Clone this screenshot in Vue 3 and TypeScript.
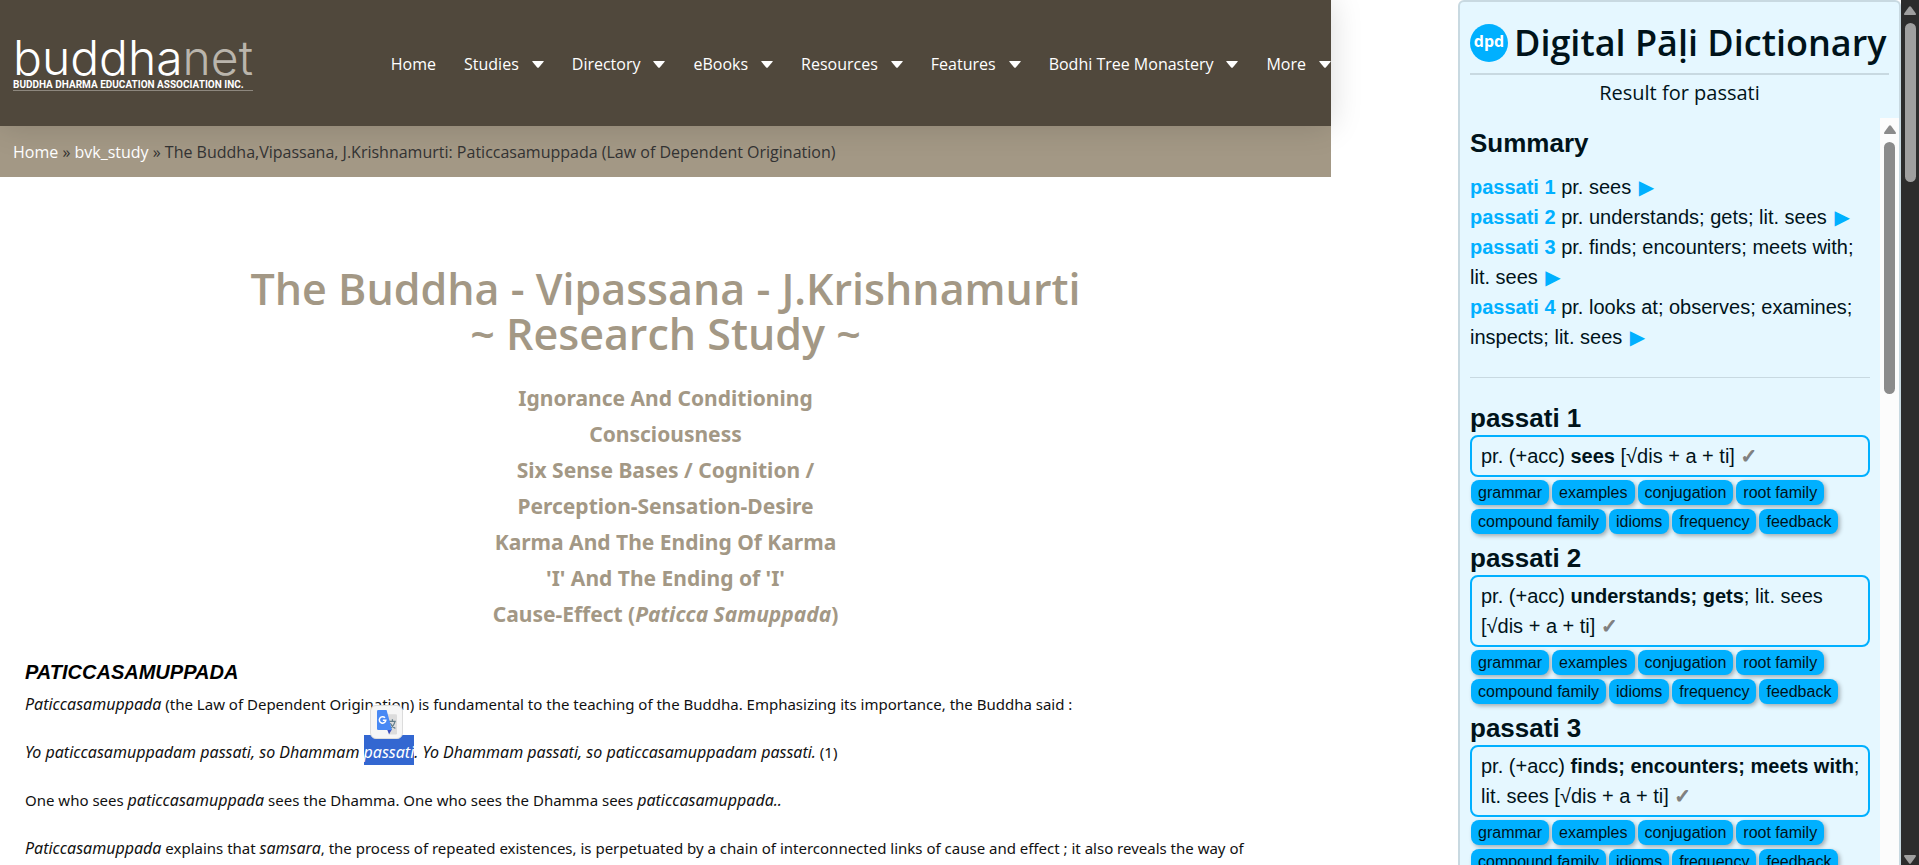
<script setup lang="ts">
interface NavItem { label: string; menu: boolean }
interface Summary { word: string; text: string }
interface Entry { word: string; meaning: string; literal: string }

const nav: NavItem[] = [
  { label: 'Home', menu: false },
  { label: 'Studies', menu: true },
  { label: 'Directory', menu: true },
  { label: 'eBooks', menu: true },
  { label: 'Resources', menu: true },
  { label: 'Features', menu: true },
  { label: 'Bodhi Tree Monastery', menu: true },
  { label: 'More', menu: true },
]

const summary: Summary[] = [
  { word: 'passati 1', text: 'pr. sees' },
  { word: 'passati 2', text: 'pr. understands; gets; lit. sees' },
  { word: 'passati 3', text: 'pr. finds; encounters; meets with; lit. sees' },
  { word: 'passati 4', text: 'pr. looks at; observes; examines; inspects; lit. sees' },
]

const entries: Entry[] = [
  { word: 'passati 1', meaning: 'sees', literal: '' },
  { word: 'passati 2', meaning: 'understands; gets', literal: '; lit. sees' },
  { word: 'passati 3', meaning: 'finds; encounters; meets with', literal: '; lit. sees' },
]

const sections: string[] = [
  'grammar', 'examples', 'conjugation', 'root family',
  'compound family', 'idioms', 'frequency', 'feedback',
]
</script>

<template>
  <div class="page">
    <div class="site">
      <header class="site-header">
        <a class="brand" href="#">
          <span class="brand-name">buddha<span class="brand-net">net</span></span>
          <span class="brand-tag">BUDDHA DHARMA EDUCATION ASSOCIATION INC.</span>
        </a>
        <nav class="nav" aria-label="Main">
          <a v-for="item in nav" :key="item.label" class="nav-link" href="#">
            {{ item.label }}
            <svg v-if="item.menu" class="caret" viewBox="0 0 12 7" aria-hidden="true"><path d="M0.8 0h10.4q1 0 .4.8L6.8 6.4q-.8.8-1.6 0L.4.8Q-.2 0 .8 0z" /></svg>
          </a>
        </nav>
      </header>
      <div class="crumbs">
        <a href="#">Home</a> » <a href="#">bvk_study</a> » The Buddha,Vipassana, J.Krishnamurti: Paticcasamuppada (Law of Dependent Origination)
      </div>
      <main class="article">
        <h1>The Buddha - Vipassana - J.Krishnamurti<br>~ Research Study ~</h1>
        <h2>
          Ignorance And Conditioning<br>
          Consciousness<br>
          Six Sense Bases / Cognition /<br>
          Perception-Sensation-Desire<br>
          Karma And The Ending Of Karma<br>
          'I' And The Ending of 'I'<br>
          Cause-Effect (<em>Paticca Samuppada</em>)
        </h2>
        <h3>PATICCASAMUPPADA</h3>
        <p><em>Paticcasamuppada</em> (the Law of Dependent Origination) is fundamental to the teaching of the Buddha. Emphasizing its importance, the Buddha said :</p>
        <p>
          <em>Yo paticcasamuppadam passati, so Dhammam <span class="selected">passati<button class="translate" type="button" aria-label="Translate selection"><svg viewBox="0 0 24 30" aria-hidden="true">
            <path d="M9 5h13.500q1.500 0 1.500 1.500V28q0 1.500-1.500 1.500H14z" fill="#dcdcdc" />
            <path d="M13.500 13.500h9M18.500 11v2.500M21.500 14q-1.500 6-6.500 8.500M16 16q2 4.500 6 6" fill="none" stroke="#607d8b" stroke-width="1.500" />
            <path d="M12 23h6l-3.500 6z" fill="#3a4fc0" />
            <path d="M1.500 0h10L18 24H1.500Q0 24 0 22.500v-21Q0 0 1.500 0z" fill="#4889f4" />
            <path d="M9.600 9.300A3.900 3.900 0 1 0 10.600 12.300H7" fill="none" stroke="#fff" stroke-width="1.800" />
          </svg></button></span>. Yo Dhammam passati, so paticcasamuppadam passati.</em> (1)
        </p>
        <p>One who sees <em>paticcasamuppada</em> sees the Dhamma. One who sees the Dhamma sees <em>paticcasamuppada..</em></p>
        <p><em>Paticcasamuppada</em> explains that <em>samsara</em>, the process of repeated existences, is perpetuated by a chain of interconnected links of cause and effect ; it also reveals the way of</p>
      </main>
    </div>

    <aside class="panel">
      <header class="panel-header">
        <div class="panel-title">
          <svg class="dpd" viewBox="0 0 38 38" role="img" aria-label="dpd">
            <circle cx="19" cy="19" r="19" fill="#00b0ff" />
            <text x="19" y="23" text-anchor="middle" class="dpd-text">dpd</text>
          </svg>
          <span>Digital Pāḷi Dictionary</span>
        </div>
        <div class="panel-result">Result for passati</div>
      </header>
      <div class="panel-body">
        <div class="results">
          <h4>Summary</h4>
          <ul class="summary">
            <li v-for="s in summary" :key="s.word">
              <b>{{ s.word }}</b> {{ s.text }} <a href="#" :aria-label="'Go to ' + s.word">▶</a>
            </li>
          </ul>
          <hr>
          <section v-for="e in entries" :key="e.word" class="entry">
            <h4>{{ e.word }}</h4>
            <div class="meaning">pr. (+acc) <b>{{ e.meaning }}</b>{{ e.literal }} [√dis + a + ti] <span class="tick">✓</span></div>
            <div class="buttons">
              <button v-for="s in sections" :key="s" type="button">{{ s }}</button>
            </div>
          </section>
        </div>
        <div class="track track-light" aria-hidden="true">
          <svg class="arrow" viewBox="0 0 12 9"><path d="M5 .8q1-1.200 2 0l4.700 6.400q.8 1.800-.9 1.800H1.200q-1.700 0-.9-1.800z" /></svg>
          <div class="thumb"></div>
        </div>
      </div>
    </aside>

    <div class="track track-dark" aria-hidden="true">
      <svg class="arrow" viewBox="0 0 12 9"><path d="M5 .8q1-1.200 2 0l4.700 6.400q.8 1.800-.9 1.800H1.200q-1.700 0-.9-1.800z" /></svg>
      <div class="thumb"></div>
      <svg class="arrow arrow-down" viewBox="0 0 12 9"><path d="M5 8.200q1 1.200 2 0l4.700-6.400Q12.500 0 10.800 0H1.200Q-.5 0 .3 1.800z" /></svg>
    </div>
  </div>
</template>

<style>
body {
  background: #fff;
  overflow: hidden;
}
</style>

<style scoped>
* {
  box-sizing: border-box;
}
.page {
  display: flex;
  height: 100vh;
  overflow: hidden;
  font-family: "Open Sans", "Noto Sans", sans-serif;
  font-size: 15px;
  color: #111;
}
.site {
  flex: 1;
  min-width: 0;
  margin-right: 127px;
}
.site-header {
  position: relative;
  display: flex;
  align-items: center;
  justify-content: space-between;
  height: 126px;
  padding-left: 13px;
  background: #50483c;
  box-shadow: 0 0 30px rgba(0, 0, 0, 0.15);
}
.brand {
  display: flex;
  flex-direction: column;
  color: #fff;
  text-decoration: none;
  white-space: nowrap;
}
.brand-name {
  font: 300 48px/44px Inter, "Liberation Sans", sans-serif;
}
.brand-net {
  color: #bab5ac;
}
.brand-tag {
  border-bottom: 1px solid #8d877e;
  font: bold 10px/10px Roboto, "Liberation Sans", sans-serif;
}
.nav {
  display: flex;
  gap: 28px;
  padding-top: 2px;
}
.nav-link {
  display: flex;
  align-items: center;
  gap: 13px;
  color: #fff;
  font-size: 16px;
  line-height: 24px;
  text-decoration: none;
  white-space: nowrap;
}
.caret {
  width: 12px;
  height: 7px;
  fill: #fff;
}
.crumbs {
  padding: 14px 13px 12px;
  background: #a39885;
  color: #333;
  font-size: 16px;
  line-height: 25px;
  white-space: nowrap;
}
.crumbs a {
  color: #fff;
  text-decoration: none;
}
.article {
  padding: 89px 25px 0;
}
h1, h2, h3, h4, p, ul {
  margin: 0;
}
h1, h2 {
  color: #a39885;
  text-align: center;
}
h1 {
  font-size: 43px;
  font-weight: 600;
  line-height: 45px;
}
h2 {
  margin-top: 24px;
  font-family: "Noto Sans", sans-serif;
  font-size: 21px;
  font-weight: 700;
  line-height: 36px;
}
h3 {
  margin: 25px 0 5px;
  color: #000;
  font: italic bold 20px/30px "Liberation Sans", sans-serif;
}
p {
  margin-bottom: 24px;
  font-family: "Noto Sans", sans-serif;
  line-height: 24px;
  white-space: nowrap;
}
p em {
  font-size: 16px;
  line-height: 20px;
}
.selected {
  position: relative;
  padding: 6px 0 2px;
  background: #3367d1;
  color: #fff;
}
.translate {
  position: absolute;
  top: -30px;
  left: 6px;
  width: 33px;
  height: 34px;
  padding: 4px;
  border: 1px solid #dcdcdc;
  border-radius: 6px;
  background: #f6f6f6;
}
.translate svg {
  display: block;
  width: 24px;
  height: 25px;
}
.panel {
  display: flex;
  flex-direction: column;
  width: 443px;
  border: 2px solid #c8d9e1;
  border-bottom: 0;
  border-radius: 6px 6px 0 0;
  background: #e5f7ff;
  color: #00131a;
}
.panel-header {
  padding: 10px 10px 0;
}
.panel-title {
  display: flex;
  align-items: center;
  gap: 6px;
  height: 63px;
  border-bottom: 2px solid #c8d9e1;
  font-size: 36px;
  font-weight: 600;
  line-height: 48px;
  white-space: nowrap;
}
.dpd {
  flex: none;
  width: 38px;
  height: 38px;
}
.dpd-text {
  fill: #fff;
  font: 700 16px "Open Sans", sans-serif;
}
.panel-result {
  height: 43px;
  font-size: 20px;
  line-height: 35px;
  text-align: center;
}
.panel-body {
  display: flex;
  flex: 1;
  min-height: 0;
}
.results {
  flex: 1;
  overflow: hidden;
  padding: 10px 10px 0;
  font: 20px/30px "Liberation Sans", Arial, sans-serif;
}
h4 {
  font-size: 26px;
  line-height: 30px;
}
.summary {
  margin-top: 14px;
  padding: 0;
  list-style: none;
}
.summary b, .summary a {
  color: #00b0ff;
}
.summary a, .tick {
  font-family: "DejaVu Sans", sans-serif;
  line-height: 20px;
  text-decoration: none;
}
.summary a {
  margin-left: 2px;
}
.tick {
  color: #808080;
  -webkit-text-stroke: 1px #808080;
}
hr {
  margin: 25px 0;
  border: 0;
  border-top: 1px solid #c8d9e1;
}
.entry {
  margin-bottom: 9px;
}
.meaning {
  margin: 2px 0 3px;
  padding: 4px 7px 4px 9px;
  border: 2px solid #00b0ff;
  border-radius: 8px;
}
.buttons {
  display: flex;
  flex-wrap: wrap;
  gap: 4px 3px;
  padding-left: 1px;
}
.buttons button {
  height: 25px;
  padding: 0 7px;
  border: 0;
  border-radius: 8px;
  background: #00b0ff;
  box-shadow: 2px 2px 4px rgba(0, 0, 0, 0.3);
  color: #00131a;
  font: 16px/25px "Liberation Sans", Arial, sans-serif;
}
.track {
  display: flex;
  flex: none;
  flex-direction: column;
  align-items: center;
  fill: currentColor;
}
.track-light {
  width: 19px;
  padding-top: 7px;
  background: #fcfcfc;
  color: #8b8b8b;
}
.track-dark {
  width: 18px;
  padding: 6px 0 1px;
  background: #2c2c2c;
  color: #9f9f9f;
}
.arrow {
  width: 12px;
  height: 9px;
}
.thumb {
  width: 11px;
  margin-top: 8px;
  border-radius: 6px;
  background: currentColor;
}
.track-light .thumb {
  height: 34%;
}
.track-dark .thumb {
  height: 18.5%;
}
.arrow-down {
  margin-top: auto;
}
</style>
